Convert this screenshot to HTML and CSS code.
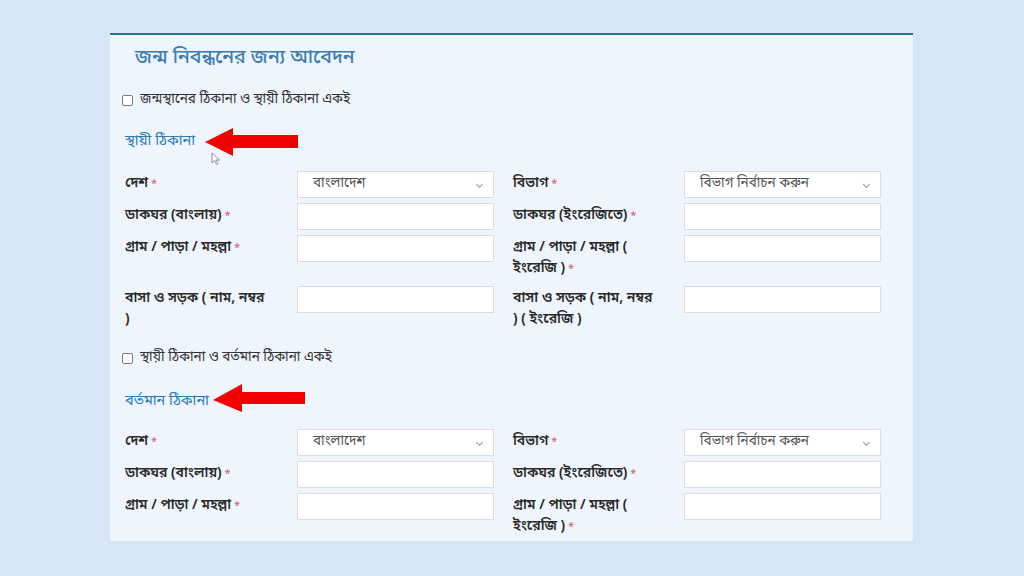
FILE: index.html
```html
<!DOCTYPE html>
<html lang="bn">
<head>
<meta charset="utf-8">
<title>জন্ম নিবন্ধনের জন্য আবেদন</title>
<link rel="stylesheet" href="styles.css">
</head>
<body>
<div class="panel">
  <h1 class="title">জন্ম নিবন্ধনের জন্য আবেদন</h1>

  <label class="check"><span class="box"></span>জন্মস্থানের ঠিকানা ও স্থায়ী ঠিকানা একই</label>

  <h2 class="section">স্থায়ী ঠিকানা</h2>

  <div class="grid">
    <div class="lbl req">দেশ</div>
    <div class="ctl"><div class="select">বাংলাদেশ<span class="chev"></span></div></div>
    <div class="lbl req">বিভাগ</div>
    <div class="ctl"><div class="select">বিভাগ নির্বাচন করুন<span class="chev"></span></div></div>

    <div class="lbl req">ডাকঘর (বাংলায়)</div>
    <div class="ctl"><div class="input"></div></div>
    <div class="lbl req">ডাকঘর (ইংরেজিতে)</div>
    <div class="ctl"><div class="input"></div></div>

    <div class="lbl req">গ্রাম / পাড়া / মহল্লা</div>
    <div class="ctl"><div class="input"></div></div>
    <div class="lbl req">গ্রাম / পাড়া / মহল্লা ( ইংরেজি )</div>
    <div class="ctl"><div class="input"></div></div>

    <div class="lbl">বাসা ও সড়ক ( নাম, নম্বর )</div>
    <div class="ctl"><div class="input"></div></div>
    <div class="lbl">বাসা ও সড়ক ( নাম, নম্বর ) ( ইংরেজি )</div>
    <div class="ctl"><div class="input"></div></div>
  </div>

  <label class="check check2"><span class="box"></span>স্থায়ী ঠিকানা ও বর্তমান ঠিকানা একই</label>

  <h2 class="section section2">বর্তমান ঠিকানা</h2>

  <div class="grid grid2">
    <div class="lbl req">দেশ</div>
    <div class="ctl"><div class="select">বাংলাদেশ<span class="chev"></span></div></div>
    <div class="lbl req">বিভাগ</div>
    <div class="ctl"><div class="select">বিভাগ নির্বাচন করুন<span class="chev"></span></div></div>

    <div class="lbl req">ডাকঘর (বাংলায়)</div>
    <div class="ctl"><div class="input"></div></div>
    <div class="lbl req">ডাকঘর (ইংরেজিতে)</div>
    <div class="ctl"><div class="input"></div></div>

    <div class="lbl req">গ্রাম / পাড়া / মহল্লা</div>
    <div class="ctl"><div class="input"></div></div>
    <div class="lbl req">গ্রাম / পাড়া / মহল্লা ( ইংরেজি )</div>
    <div class="ctl"><div class="input"></div></div>
  </div>

  <svg class="arrow arrow1" width="96" height="32" viewBox="0 0 96 32">
    <polygon points="0,14 28,0 28,7 93,7 93,20 28,20 28,28" fill="#f40000"/>
  </svg>
  <svg class="cursor" width="10" height="14" viewBox="0 0 10 14">
    <path d="M1 1 L1 11 L3.5 8.5 L5.5 12.5 L7 11.8 L5 8 L8.5 8 Z" fill="#fff" stroke="#777" stroke-width="0.8"/>
  </svg>
  <svg class="arrow arrow2" width="96" height="32" viewBox="0 0 96 32">
    <polygon points="0,16 29,0 29,8 92,8 92,20 29,20 29,28" fill="#f40000"/>
  </svg>
</div>
</body>
</html>
```

FILE: styles.css
```css
html, body {
  margin: 0;
  padding: 0;
}
body {
  background: #d5e7f6;
  width: 1024px;
  height: 576px;
  overflow: hidden;
  font-family: "Noto Sans Bengali", "Lohit Bengali", "Noto Sans", "Liberation Sans", sans-serif;
  color: #2b2b2b;
}
.panel {
  position: relative;
  margin: 33px 0 0 110px;
  width: 803px;
  height: 508px;
  box-sizing: border-box;
  border-top: 2px solid #2e6c90;
  background: #eef5fc;
  padding: 0 0 0 15px;
  overflow: hidden;
}
.title {
  margin: 11px 0 0 10px;
  font-size: 19.5px;
  line-height: 24px;
  font-weight: 500;
  color: #3b7db3;
}
.check {
  display: flex;
  align-items: center;
  margin: 20px 0 0 -3px;
  font-size: 13.5px;
  line-height: 20px;
  color: #333;
}
.check2 {
  margin-top: 17px;
}
.box {
  width: 9px;
  height: 9px;
  border: 1px solid #7a7a7a;
  border-radius: 2px;
  background: #fff;
  margin-right: 7px;
  flex: none;
}
.section {
  margin: 22px 0 0 0;
  font-size: 14.5px;
  line-height: 20px;
  font-weight: 400;
  color: #2b7ab6;
}
.section2 {
  margin-top: 24px;
}
.grid {
  display: grid;
  grid-template-columns: 172px 197px 19px 171px 197px;
  row-gap: 5px;
  margin-top: 19px;
}
.grid2 {
  margin-top: 17px;
}
.grid .lbl:nth-child(4n+3) {
  grid-column: 4;
}
.lbl {
  font-size: 14px;
  font-weight: 600;
  line-height: 21px;
  padding: 2px 26px 1px 0;
  color: #2a2a2a;
}
.lbl.req::after {
  content: " *";
  color: #e0506a;
  font-weight: 400;
  font-size: 11px;
}
.ctl {
  height: 27px;
}
.input, .select {
  box-sizing: border-box;
  height: 27px;
  background: #fff;
  border: 1px solid #d9dde2;
}
.select {
  position: relative;
  padding-left: 15px;
  font-size: 13.5px;
  line-height: 25px;
  color: #555;
}
.chev {
  position: absolute;
  right: 11px;
  top: 10px;
  width: 4px;
  height: 4px;
  border-right: 1px solid #999;
  border-bottom: 1px solid #999;
  transform: rotate(45deg);
}
.arrow {
  position: absolute;
}
.arrow1 {
  left: 95px;
  top: 93px;
}
.arrow2 {
  left: 103px;
  top: 349px;
}
.cursor {
  position: absolute;
  left: 101px;
  top: 117px;
}
```
